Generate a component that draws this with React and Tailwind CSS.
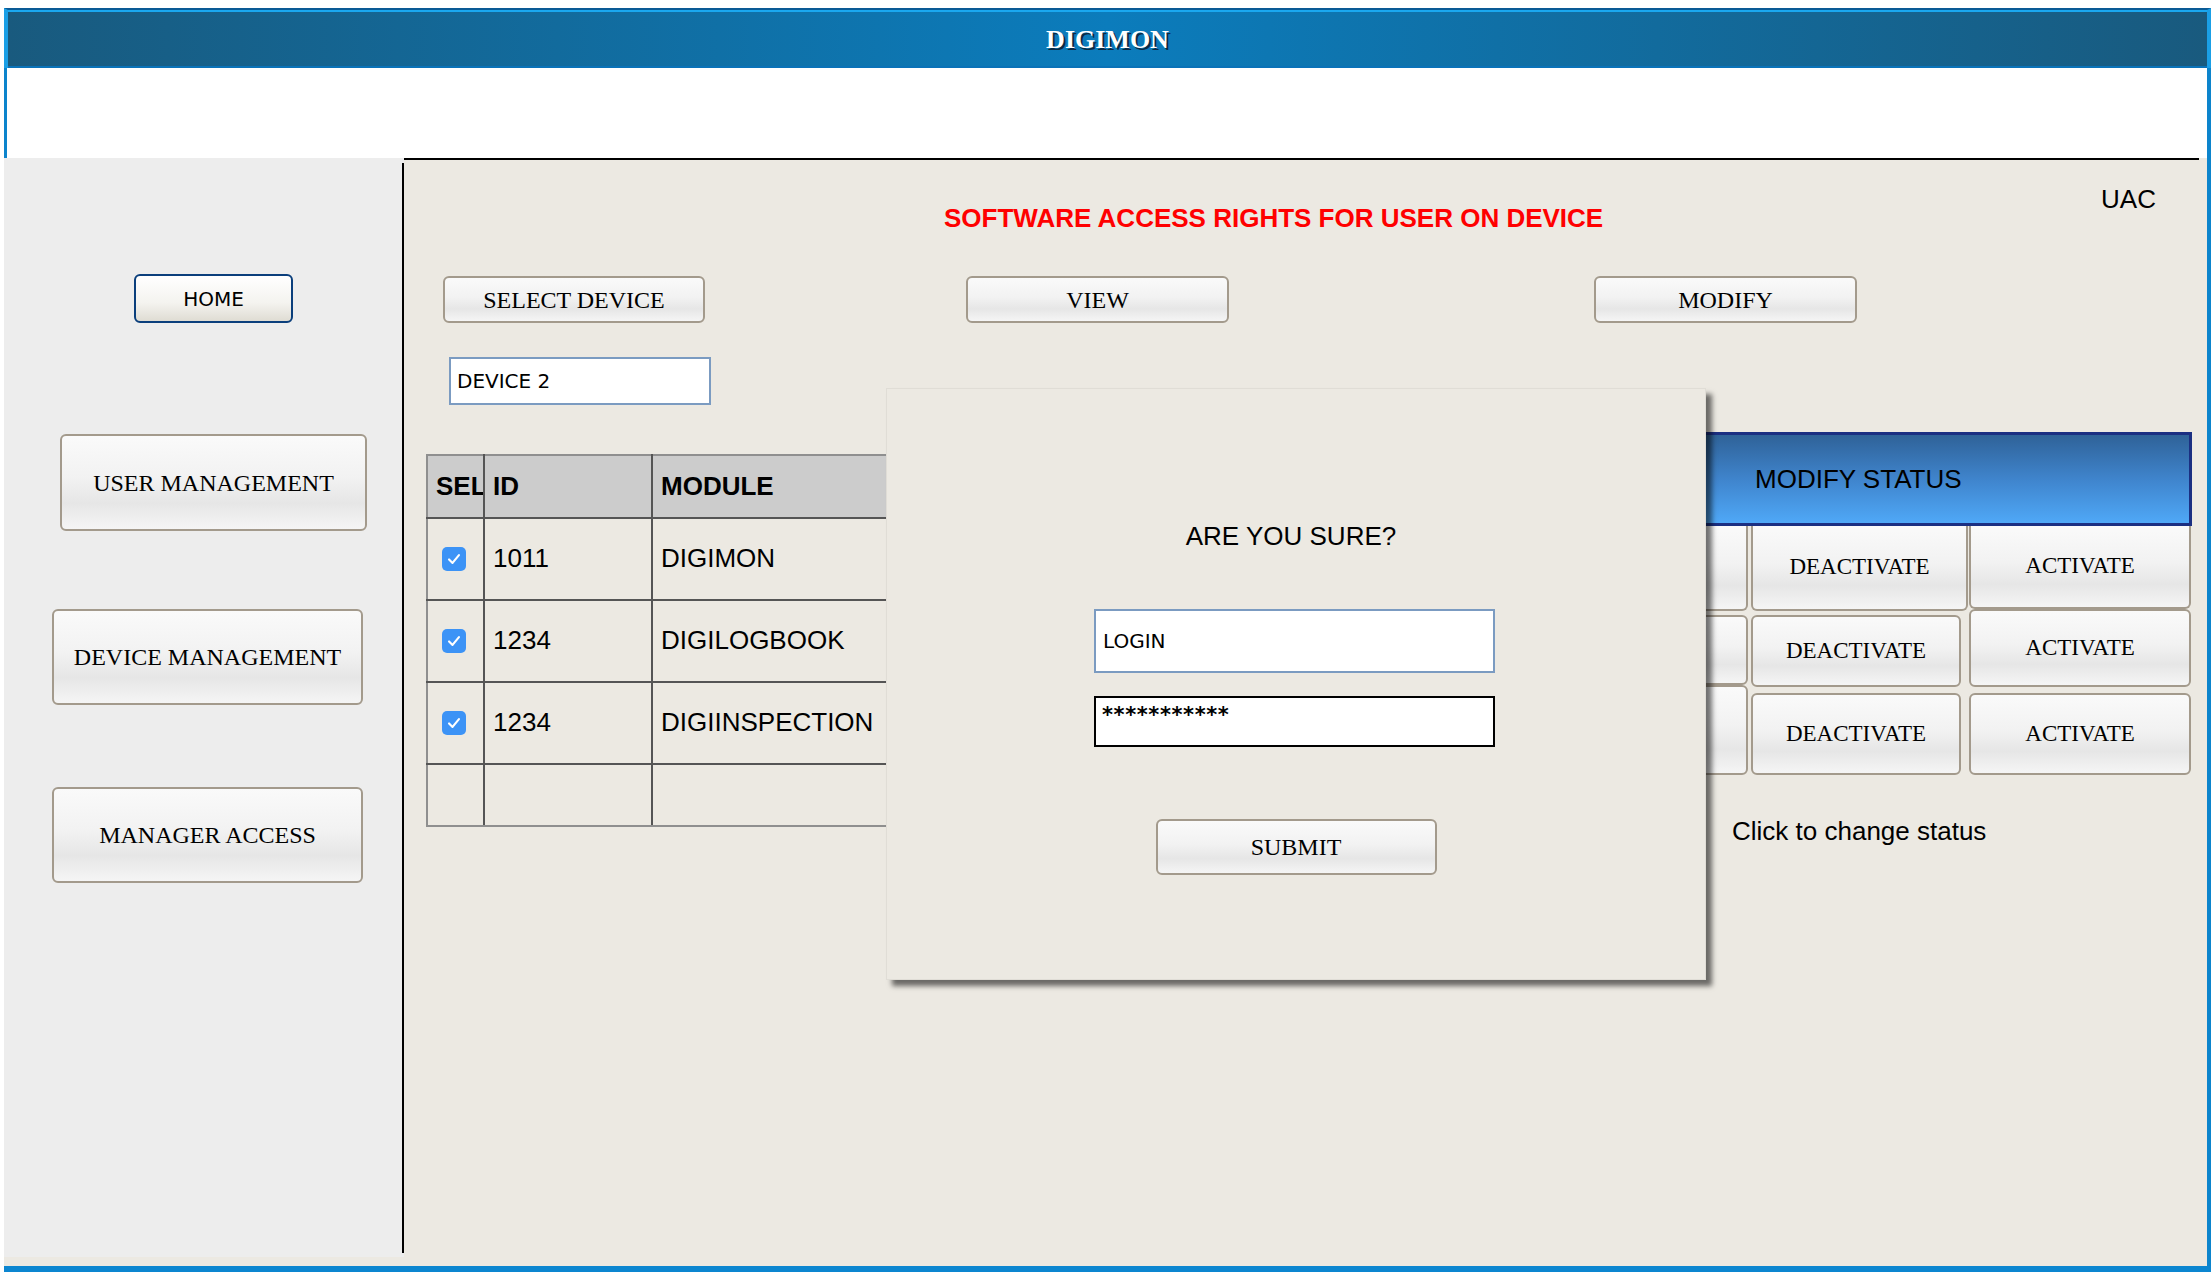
import React from 'react';

// shared look of the beige/grey push buttons
const btn =
  "flex items-center justify-center rounded-[6px] border-2 border-[#a39a8c] bg-[linear-gradient(to_bottom,#fafafa_0%,#f2f2f2_45%,#e6e6e6_72%,#f5f5f5_100%)] font-['Liberation_Serif',serif] text-black";

const Check = () => (
  <div className="w-[24px] h-[24px] rounded-[5px] bg-[#3c93f6] flex items-center justify-center">
    <svg width="18" height="18" viewBox="0 0 16 16" fill="none">
      <path d="M3.6 8.4 L6.7 11.5 L12.4 4.6" stroke="#ffffff" strokeWidth="1.9" strokeLinecap="round" strokeLinejoin="round" />
    </svg>
  </div>
);

const rows = [
  { id: '1011', module: 'DIGIMON' },
  { id: '1234', module: 'DIGILOGBOOK' },
  { id: '1234', module: 'DIGIINSPECTION' },
];

const App = () => {
  return (
    <div className="w-[2212px] h-[1272px] bg-white pt-[8px] pl-[4px] pr-[1px] flex flex-col overflow-hidden font-['Liberation_Sans',Arial,sans-serif] text-black">
      {/* --- TITLE BAR --- */}
      <div className="h-[60px] flex flex-col border-t-2 border-t-[#0a5a95] border-x-[4px] border-x-[#1a9fe6]">
        <div className="h-[2px] bg-[#1aa8f0]"></div>
        <div className="flex-1 flex items-center justify-center border-b-2 border-b-[#0a72b8] bg-[linear-gradient(to_right,#195a7e_0%,#0b7cbc_50%,#195a7e_100%)]">
          <span className="font-['Liberation_Serif',serif] font-bold text-[26px] text-white [text-shadow:2px_2px_0_#0b2a44]">
            DIGIMON
          </span>
        </div>
      </div>

      {/* white band */}
      <div className="h-[90px] border-l-[3px] border-r-[4px] border-[#0c84cc]"></div>

      {/* --- BODY --- */}
      <div className="flex flex-1 bg-[#ece9e2] border-b-[6px] border-[#0c86d0]">
        {/* Sidebar */}
        <div className="flex w-[400px] mb-[9px] bg-[#ededed]">
          <div className="flex-1 flex flex-col items-start">
            <div className="ml-[130px] mt-[116px] w-[159px] h-[49px] rounded-[6px] border-2 border-[#0b3f7c] bg-[linear-gradient(to_bottom,#ffffff_0%,#f4f3ef_60%,#dfdcd3_100%)] flex items-center justify-center font-['DejaVu_Sans',sans-serif] text-[20px]">
              HOME
            </div>
            <div className={`${btn} ml-[56px] mt-[111px] w-[307px] h-[97px] text-[24px]`}>USER MANAGEMENT</div>
            <div className={`${btn} ml-[48px] mt-[78px] w-[311px] h-[96px] text-[24px]`}>DEVICE MANAGEMENT</div>
            <div className={`${btn} ml-[48px] mt-[82px] w-[311px] h-[96px] text-[24px]`}>MANAGER ACCESS</div>
          </div>
          <div className="w-[2px] bg-black mt-[5px] mb-[4px]"></div>
        </div>

        {/* Main */}
        <div className="flex-1 flex flex-col border-r-[4px] border-[#0c84cc]">
          <div className="h-[2px] bg-black mr-[8px]"></div>
          <div className="relative flex-1 flex flex-col">
            <div className="flex items-start h-[116px]">
              <div className="ml-[540px] mt-[43px] text-[26px] leading-[30px] font-bold text-[#ff0000]">
                SOFTWARE ACCESS RIGHTS FOR USER ON DEVICE
              </div>
              <div className="ml-auto mr-[51px] mt-[24px] text-[26px] leading-[30px]">UAC</div>
            </div>

            {/* action buttons */}
            <div className="flex">
              <div className={`${btn} ml-[39px] w-[262px] h-[47px] text-[24px]`}>SELECT DEVICE</div>
              <div className={`${btn} ml-[261px] w-[263px] h-[47px] text-[24px]`}>VIEW</div>
              <div className={`${btn} ml-[365px] w-[263px] h-[47px] text-[24px]`}>MODIFY</div>
            </div>

            <div className="flex">
              {/* device + module table */}
              <div className="flex flex-col">
                <div className="ml-[45px] mt-[34px] w-[262px] h-[48px] border-2 border-[#7b9bc1] bg-white flex items-center pl-[6px] font-['DejaVu_Sans',sans-serif] text-[20px]">
                  DEVICE 2
                </div>
                <table className="ml-[22px] mt-[49px] w-[674px] table-fixed border-collapse text-[26px] leading-[30px]">
                  <colgroup>
                    <col className="w-[57px]" />
                    <col className="w-[168px]" />
                    <col />
                  </colgroup>
                  <thead>
                    <tr className="h-[63px] bg-[#cccccc]">
                      <th className="border-2 border-[#555555] border-t-[#8f8f8f] border-l-[#8f8f8f] text-left pl-[8px] pb-[2px] font-bold overflow-hidden whitespace-nowrap">SEL</th>
                      <th className="border-2 border-[#555555] border-t-[#8f8f8f] text-left pl-[8px] pb-[2px] font-bold">ID</th>
                      <th className="border-2 border-[#555555] border-t-[#8f8f8f] text-left pl-[8px] pb-[2px] font-bold">MODULE</th>
                    </tr>
                  </thead>
                  <tbody>
                    {rows.map((r, i) => (
                      <tr key={i} className="h-[82px]">
                        <td className="border-2 border-[#555555] border-l-[#8f8f8f] pl-[14px]">
                          <Check />
                        </td>
                        <td className="border-2 border-[#555555] pl-[8px] pb-[3px]">{r.id}</td>
                        <td className="border-2 border-[#555555] pl-[8px] pb-[3px] whitespace-nowrap">{r.module}</td>
                      </tr>
                    ))}
                    <tr className="h-[62px]">
                      <td className="border-2 border-[#555555] border-l-[#8f8f8f] border-b-[#8f8f8f]"></td>
                      <td className="border-2 border-[#555555] border-b-[#8f8f8f]"></td>
                      <td className="border-2 border-[#555555] border-b-[#8f8f8f]"></td>
                    </tr>
                  </tbody>
                </table>
              </div>

              {/* modify status panel */}
              <div className="ml-auto mr-[15px] mt-[109px] w-[632px]">
                <div className="h-[94px] border-[3px] border-[#1b2f82] bg-[linear-gradient(to_bottom,#2f6298_0%,#3f84cc_50%,#4fa8f7_100%)] flex items-center pl-[192px] text-[26px]">
                  MODIFY STATUS
                </div>
                <div className="flex">
                  <div className="w-[188px] flex flex-col">
                    <div className={`${btn} h-[85px] border-t-0 rounded-t-none`}></div>
                    <div className={`${btn} mt-[4px] h-[70px]`}></div>
                    <div className={`${btn} h-[90px]`}></div>
                  </div>
                  <div className="ml-[3px] w-[217px] flex flex-col">
                    <div className={`${btn} h-[85px] border-t-0 rounded-t-none text-[23px]`}>DEACTIVATE</div>
                    <div className={`${btn} mt-[4px] w-[210px] h-[72px] text-[23px]`}>DEACTIVATE</div>
                    <div className={`${btn} mt-[6px] w-[210px] h-[82px] text-[23px]`}>DEACTIVATE</div>
                  </div>
                  <div className="ml-[1px] w-[222px] flex flex-col">
                    <div className={`${btn} h-[83px] border-t-0 rounded-t-none text-[23px]`}>ACTIVATE</div>
                    <div className={`${btn} h-[78px] text-[23px]`}>ACTIVATE</div>
                    <div className={`${btn} mt-[6px] h-[82px] text-[23px]`}>ACTIVATE</div>
                  </div>
                </div>
                <div className="mt-[41px] ml-[172px] text-[26px] leading-[30px]">Click to change status</div>
              </div>
            </div>

            {/* confirmation dialog over the content */}
            <div className="absolute left-[482px] top-[228px] w-[820px] h-[592px] bg-[#ece9e2] border border-[#e0ddd6] shadow-[6px_6px_5px_rgba(0,0,0,0.55)] flex flex-col items-center pt-[132px]">
              <div className="mr-[10px] text-[26px] leading-[30px]">ARE YOU SURE?</div>
              <div className="mt-[58px] mr-[3px] w-[401px] h-[64px] border-2 border-[#7b9bc1] bg-white flex items-center pl-[7px] font-['DejaVu_Sans',sans-serif] text-[20px]">
                LOGIN
              </div>
              <div className="mt-[23px] mr-[3px] w-[401px] h-[51px] border-2 border-black bg-white pl-[6px] pt-[4px] font-['DejaVu_Sans',sans-serif] font-bold text-[21px] leading-[26px] tracking-[0.6px]">
                ***********
              </div>
              <div className={`${btn} mt-[72px] w-[281px] h-[56px] text-[24px]`}>SUBMIT</div>
            </div>
          </div>
        </div>
      </div>
    </div>
  );
};

export default App;
